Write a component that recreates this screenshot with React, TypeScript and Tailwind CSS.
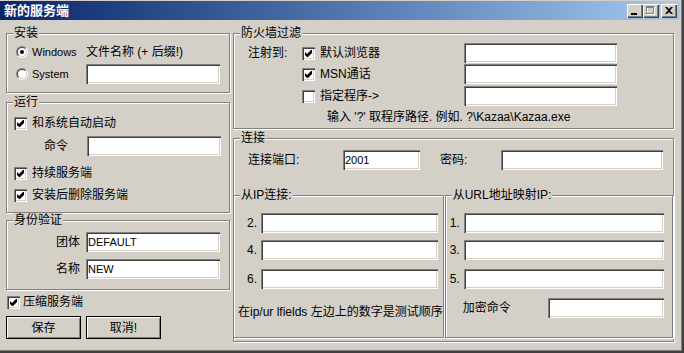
import type { ReactNode } from "react";

const sunken =
  "bg-white shadow-[inset_1px_1px_0_#808080,inset_2px_2px_0_#404040,inset_-1px_-1px_0_#fff,inset_-2px_-2px_0_#d4d0c8]";

function Field({ className = "", value = "" }: { className?: string; value?: string }) {
  return (
    <input
      readOnly
      defaultValue={value}
      className={`h-[20px] ${sunken} pl-[2px] text-[11px] outline-none ${className}`}
    />
  );
}

function Check({ checked = false }: { checked?: boolean }) {
  return (
    <div className={`w-[13px] h-[13px] shrink-0 ${sunken}`}>
      {checked && (
        <svg width="13" height="13" viewBox="0 0 13 13">
          <polygon points="3,5 5,7 9,3 10,3 10,6 6,10 5,10 3,8" fill="#000" />
        </svg>
      )}
    </div>
  );
}

function Radio({ checked = false }: { checked?: boolean }) {
  return (
    <div className="relative w-[12px] h-[12px] shrink-0 rounded-full border border-t-[#808080] border-l-[#808080] border-r-white border-b-white">
      <div className="w-full h-full rounded-full bg-white border border-t-[#404040] border-l-[#404040] border-r-[#d4d0c8] border-b-[#d4d0c8] flex items-center justify-center">
        {checked && <div className="w-[4px] h-[4px] rounded-full bg-black" />}
      </div>
    </div>
  );
}

function Group({ title, className = "", children }: { title: string; className?: string; children?: ReactNode }) {
  return (
    <div className={`relative border border-[#808080] shadow-[inset_1px_1px_0_#fff,1px_1px_0_#fff] ${className}`}>
      <span className="absolute left-[6px] top-[-8px] bg-[#d4d0c8] px-[1px] leading-[14px] whitespace-nowrap">
        {title}
      </span>
      {children}
    </div>
  );
}

function Button({ children }: { children: ReactNode }) {
  return (
    <button className="w-[75px] h-[23px] border border-black bg-[#d4d0c8] shadow-[inset_1px_1px_0_#fff,inset_-1px_-1px_0_#808080] leading-none">
      {children}
    </button>
  );
}

const capBtn =
  "w-[16px] h-[14px] bg-[#d4d0c8] shadow-[inset_1px_1px_0_#fff,inset_-1px_-1px_0_#404040,inset_-2px_-2px_0_#808080] flex items-center justify-center";

export default function App() {
  return (
    <div className="w-[684px] h-[353px] bg-[#d4d0c8] pt-[1px] pr-[4px] pb-[3px] text-[12px] text-black font-['Liberation_Sans','Noto_Sans_CJK_SC',sans-serif] shadow-[inset_-1px_-1px_0_#404040,inset_-2px_-2px_0_#404040,inset_-3px_-3px_0_#808080] overflow-hidden">
      {/* title bar */}
      <div className="h-[19px] flex items-center bg-gradient-to-r from-[#0a246a] to-[#a6caf0] pl-[4px] pr-[3px]">
        <span className="text-white font-bold text-[13px] leading-none">新的服务端</span>
        <div className="ml-auto flex items-center">
          <div className={capBtn}>
            <div className="w-[6px] h-[2px] bg-black mt-[6px] mr-[2px]" />
          </div>
          <div className={capBtn}>
            <svg width="10" height="10" viewBox="0 0 10 10">
              <rect x="1.5" y="1.5" width="7" height="7" fill="none" stroke="#fff" />
              <rect x="0.5" y="0.5" width="7" height="7" fill="none" stroke="#808080" />
              <rect x="0" y="0" width="8" height="2" fill="#808080" />
            </svg>
          </div>
          <div className={`${capBtn} ml-[2px]`}>
            <svg width="8" height="7" viewBox="0 0 8 7">
              <path d="M0 0h2l2 2 2-2h2L5 3.5 8 7H6L4 5 2 7H0l3-3.5z" fill="#000" />
            </svg>
          </div>
        </div>
      </div>

      {/* body */}
      <div className="flex pl-[6px]">
        {/* left column */}
        <div className="w-[224px] flex flex-col">
          <Group title="安装" className="mt-[13px] h-[60px] pt-[8px] pl-[9px]">
            <div className="flex items-center h-[20px]">
              <Radio checked />
              <span className="ml-[4px] w-[54px] text-[11px]">Windows</span>
              <span>文件名称 (+ 后缀!)</span>
            </div>
            <div className="flex items-center h-[20px] mt-[2px]">
              <Radio />
              <span className="ml-[4px] w-[54px] text-[11px]">System</span>
              <Field className="w-[134px]" />
            </div>
          </Group>

          <Group title="运行" className="mt-[9px] h-[111px] pt-[10px] pl-[7px]">
            <div className="flex items-center h-[20px]">
              <Check checked />
              <span className="ml-[5px]">和系统自动启动</span>
            </div>
            <div className="flex items-center h-[20px] mt-[3px]">
              <span className="ml-[30px] w-[43px]">命令</span>
              <Field className="w-[134px]" />
            </div>
            <div className="flex items-center h-[20px] mt-[7px]">
              <Check checked />
              <span className="ml-[5px]">持续服务端</span>
            </div>
            <div className="flex items-center h-[20px] mt-[2px]">
              <Check checked />
              <span className="ml-[5px]">安装后删除服务端</span>
            </div>
          </Group>

          <Group title="身份验证" className="mt-[7px] h-[70px] pt-[11px]">
            <div className="flex items-center h-[20px]">
              <span className="w-[79px] text-right pr-[6px]">团体</span>
              <Field className="w-[134px]" value="DEFAULT" />
            </div>
            <div className="flex items-center h-[20px] mt-[7px]">
              <span className="w-[79px] text-right pr-[6px]">名称</span>
              <Field className="w-[134px]" value="NEW" />
            </div>
          </Group>

          <div className="flex items-center h-[14px] mt-[5px] ml-[1px]">
            <Check checked />
            <span className="ml-[3px]">压缩服务端</span>
          </div>

          <div className="flex gap-[5px] mt-[7px]">
            <Button>保存</Button>
            <Button>取消!</Button>
          </div>
        </div>

        {/* right column */}
        <div className="w-[441px] ml-[3px] flex flex-col">
          <Group title="防火墙过滤" className="mt-[13px] h-[96px] pt-[9px] pl-[14px]">
            <div className="flex items-center h-[20px]">
              <span className="w-[54px]">注射到:</span>
              <div className="w-[162px] flex items-center">
                <Check checked />
                <span className="ml-[5px]">默认浏览器</span>
              </div>
              <Field className="w-[153px]" />
            </div>
            <div className="flex items-center h-[20px] mt-[1px]">
              <span className="w-[54px]" />
              <div className="w-[162px] flex items-center">
                <Check checked />
                <span className="ml-[5px]">MSN通话</span>
              </div>
              <Field className="w-[153px]" />
            </div>
            <div className="flex items-center h-[20px] mt-[2px]">
              <span className="w-[54px]" />
              <div className="w-[162px] flex items-center">
                <Check />
                <span className="ml-[5px]">指定程序-&gt;</span>
              </div>
              <Field className="w-[153px]" />
            </div>
            <div className="ml-[79px] mt-[4px] leading-[14px]">
              输入 '?' 取程序路径. 例如. ?\Kazaa\Kazaa.exe
            </div>
          </Group>

          <Group title="连接" className="mt-[9px] h-[204px] pt-[11px]">
            <div className="flex items-center h-[20px] pl-[14px]">
              <span className="w-[95px]">连接端口:</span>
              <Field className="w-[77px]" value="2001" />
              <span className="ml-[20px] w-[61px]">密码:</span>
              <Field className="w-[162px]" />
            </div>

            <div className="flex mt-[25px] -ml-[1px]">
              <Group title="从IP连接:" className="w-[211px] h-[143px] pt-[17px]">
                {["2.", "4.", "6."].map((n, i) => (
                  <div key={n} className={`flex items-center h-[20px] ${i === 1 ? "mt-[7px]" : i === 2 ? "mt-[9px]" : ""}`}>
                    <span className="w-[27px] text-right pr-[4px]">{n}</span>
                    <Field className="w-[177px]" />
                  </div>
                ))}
                <div className="mt-[16px] ml-[4px] leading-[14px] whitespace-nowrap">
                  在ip/ur lfields 左边上的数字是测试顺序
                </div>
              </Group>

              <Group title="从URL地址映射IP:" className="ml-[1px] w-[230px] h-[143px] pt-[17px]">
                {["1.", "3.", "5."].map((n, i) => (
                  <div key={n} className={`flex items-center h-[20px] ${i === 1 ? "mt-[7px]" : i === 2 ? "mt-[9px]" : ""}`}>
                    <span className="w-[18px] text-right pr-[4px]">{n}</span>
                    <Field className="w-[200px]" />
                  </div>
                ))}
                <div className="flex items-center h-[20px] mt-[9px]">
                  <span className="ml-[17px] w-[85px]">加密命令</span>
                  <Field className="w-[116px]" />
                </div>
              </Group>
            </div>
          </Group>
        </div>
      </div>
    </div>
  );
}
